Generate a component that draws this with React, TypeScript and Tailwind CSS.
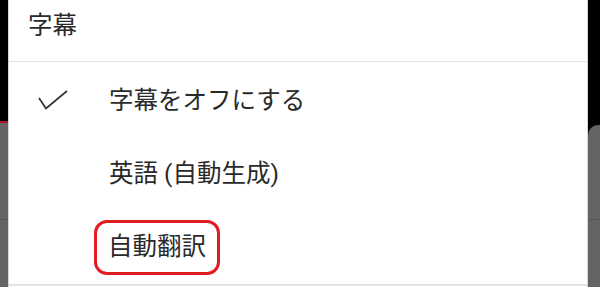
export default function App() {
  const font = { fontFamily: '"Roboto", "Noto Sans CJK JP", sans-serif' };
  return (
    <div className="flex h-[287px] w-[600px] overflow-hidden bg-white" style={font}>
      {/* video behind the sheet, left edge */}
      <div className="flex w-[8px] flex-col">
        <div className="h-[121px] bg-black" />
        <div className="h-[2px] bg-[#b3121c]" />
        <div className="h-[96px] bg-[#646464]" />
        <div className="h-[1px] bg-[#555555]" />
        <div className="flex-1 bg-[#646464]" />
      </div>

      {/* bottom sheet */}
      <div className="flex flex-1 flex-col border-x border-[#d6d6d6] bg-white text-[#2a2a2a]">
        <div className="flex h-[61px] items-center pb-[9px] pl-[19px] text-[24.5px] leading-none">字幕</div>
        <div className="h-[1px] bg-[#e2e2e2]" />
        <div className="pt-[3px]">
          <div className="flex h-[73px] items-center">
            <div className="flex w-[100px] justify-start pb-[4px] pl-[29px]">
              <svg width="30" height="22" viewBox="0 0 30 22" fill="none">
                <polyline points="1,9 8,19.5 29,2" stroke="#333333" strokeWidth="1.7" />
              </svg>
            </div>
            <span className="text-[24.5px] leading-none">字幕をオフにする</span>
          </div>
          <div className="flex h-[73px] items-center pl-[100px]">
            <span className="text-[24.5px] leading-none">英語 (自動生成)</span>
          </div>
          <div className="flex h-[73px] items-center pl-[85px]">
            <span className="flex h-[55px] items-center rounded-[13px] border-[3px] border-[#e11b22] px-[11px] text-[24.5px] leading-none">
              自動翻訳
            </span>
          </div>
        </div>
        <div className="h-[2px] bg-[#e4e4e4]" />
        <div className="flex-1" />
      </div>

      {/* video behind the sheet, right edge */}
      <div className="flex w-[12px] flex-col bg-black">
        <div className="h-[125px]" />
        <div className="h-[94px] rounded-tl-[10px] bg-[#646464]" />
        <div className="h-[1px] bg-[#555555]" />
        <div className="flex-1 bg-[#646464]" />
      </div>
    </div>
  );
}
